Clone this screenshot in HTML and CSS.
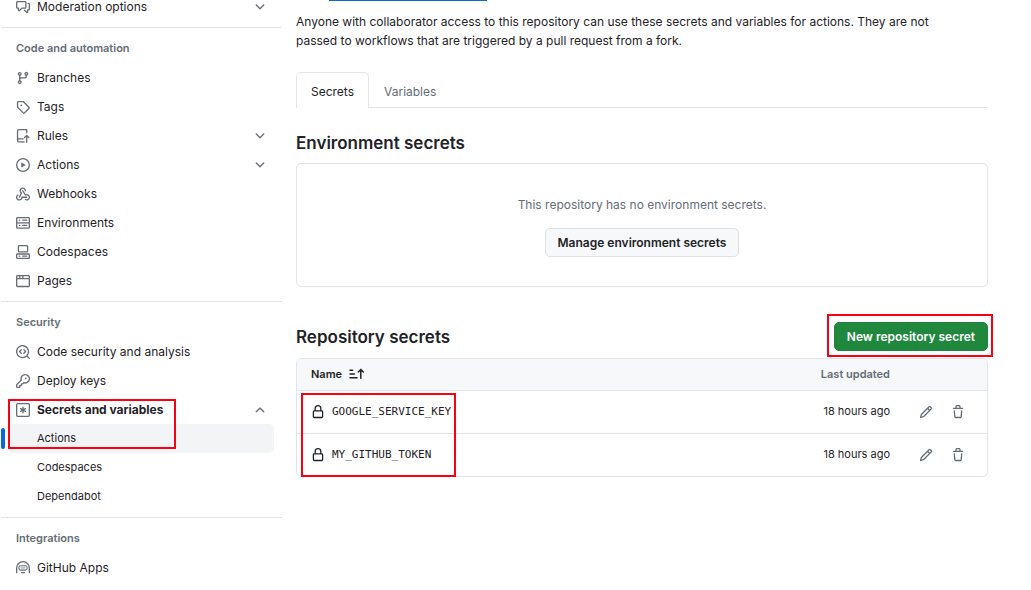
FILE: index.html
```html
<!DOCTYPE html>
<html lang="en">
<head>
<meta charset="utf-8">
<meta name="viewport" content="width=device-width, initial-scale=1">
<title>Actions secrets and variables</title>
<link rel="stylesheet" href="styles.css">
</head>
<body>
<svg class="sprite" aria-hidden="true">
  <symbol id="chevron-down" viewBox="0 0 16 16"><path d="M12.78 5.22a.749.749 0 0 1 0 1.06l-4.25 4.25a.749.749 0 0 1-1.06 0L3.22 6.28a.749.749 0 1 1 1.06-1.06L8 8.939l3.72-3.719a.749.749 0 0 1 1.06 0Z"/></symbol>
  <symbol id="chevron-up" viewBox="0 0 16 16"><path d="M3.22 10.53a.749.749 0 0 1 0-1.06l4.25-4.25a.749.749 0 0 1 1.06 0l4.25 4.25a.749.749 0 1 1-1.06 1.06L8 6.811 4.28 10.53a.749.749 0 0 1-1.06 0Z"/></symbol>
  <symbol id="discussion" viewBox="0 0 16 16"><path d="M1.75 1h8.5c.966 0 1.75.784 1.75 1.75v5.5A1.75 1.75 0 0 1 10.25 10H7.061l-2.574 2.573A1.458 1.458 0 0 1 2 11.543V10h-.25A1.75 1.75 0 0 1 0 8.25v-5.5C0 1.784.784 1 1.75 1ZM1.5 2.75v5.5c0 .138.112.25.25.25h1a.75.75 0 0 1 .75.75v2.19l2.72-2.72a.749.749 0 0 1 .53-.22h3.5a.25.25 0 0 0 .25-.25v-5.5a.25.25 0 0 0-.25-.25h-8.5a.25.25 0 0 0-.25.25Zm13 2a.25.25 0 0 0-.25-.25h-.5a.75.75 0 0 1 0-1.5h.5c.966 0 1.75.784 1.75 1.75v5.5A1.75 1.75 0 0 1 14.25 12H14v1.543a1.458 1.458 0 0 1-2.487 1.03L9.22 12.28a.749.749 0 0 1 .326-1.275.749.749 0 0 1 .734.215l2.22 2.22v-2.19a.75.75 0 0 1 .75-.75h1a.25.25 0 0 0 .25-.25Z"/></symbol>
  <symbol id="branch" viewBox="0 0 16 16"><path d="M9.5 3.25a2.25 2.25 0 1 1 3 2.122V6A2.5 2.5 0 0 1 10 8.5H6a1 1 0 0 0-1 1v1.128a2.251 2.251 0 1 1-1.5 0V5.372a2.25 2.25 0 1 1 1.5 0v1.836A2.493 2.493 0 0 1 6 7h4a1 1 0 0 0 1-1v-.628A2.25 2.25 0 0 1 9.5 3.25Zm-6 0a.75.75 0 1 0 1.5 0 .75.75 0 0 0-1.5 0Zm8.25-.75a.75.75 0 1 0 0 1.5.75.75 0 0 0 0-1.5ZM4.25 12a.75.75 0 1 0 0 1.5.75.75 0 0 0 0-1.5Z"/></symbol>
  <symbol id="tag" viewBox="0 0 16 16"><path d="M1 7.775V2.75C1 1.784 1.784 1 2.75 1h5.025c.464 0 .91.184 1.238.513l6.25 6.25a1.75 1.75 0 0 1 0 2.474l-5.026 5.026a1.75 1.75 0 0 1-2.474 0l-6.25-6.25A1.752 1.752 0 0 1 1 7.775Zm1.5 0c0 .066.026.13.073.177l6.25 6.25a.25.25 0 0 0 .354 0l5.025-5.025a.25.25 0 0 0 0-.354l-6.25-6.25a.25.25 0 0 0-.177-.073H2.75a.25.25 0 0 0-.25.25ZM6 5a1 1 0 1 1 0 2 1 1 0 0 1 0-2Z"/></symbol>
  <symbol id="rules" viewBox="0 0 16 16"><path d="M1 2.5A2.5 2.5 0 0 1 3.5 0h8.75a.75.75 0 0 1 .75.75v3.5a.75.75 0 0 1-1.5 0V1.5h-8a1 1 0 0 0-1 1v8.208A2.493 2.493 0 0 1 3.5 10.5h4.75a.75.75 0 0 1 0 1.5H3.5a1 1 0 0 0 0 2h5.75a.75.75 0 0 1 0 1.5H3.5A2.5 2.5 0 0 1 1 13Zm13.23 7.79-1.22-1.22v6.18a.75.75 0 0 1-1.5 0V9.07l-1.22 1.22a.75.75 0 1 1-1.06-1.06l2.5-2.5a.75.75 0 0 1 1.06 0l2.5 2.5a.75.75 0 1 1-1.06 1.06Z"/></symbol>
  <symbol id="play" viewBox="0 0 16 16"><path d="M8 0a8 8 0 1 1 0 16A8 8 0 0 1 8 0ZM1.5 8a6.5 6.5 0 1 0 13 0 6.5 6.5 0 0 0-13 0Zm4.879-2.773 4.264 2.559a.25.25 0 0 1 0 .428l-4.264 2.559A.25.25 0 0 1 6 10.559V5.442a.25.25 0 0 1 .379-.215Z"/></symbol>
  <symbol id="webhook" viewBox="0 0 16 16"><path d="M5.5 4.25a2.25 2.25 0 0 1 4.5 0 .75.75 0 0 0 1.5 0 3.75 3.75 0 1 0-6.14 2.889l-2.272 4.258a.75.75 0 0 0 1.324.706L7 7.25a.75.75 0 0 0-.309-1.015A2.25 2.25 0 0 1 5.5 4.25Z"/><path d="M7.364 3.607a.75.75 0 0 1 1.03.257l2.608 4.349a3.75 3.75 0 1 1-.628 6.785.75.75 0 0 1 .752-1.299 2.25 2.25 0 1 0-.033-3.88.75.75 0 0 1-1.03-.256L7.107 4.636a.75.75 0 0 1 .257-1.03Z"/><path d="M2.9 8.776A.75.75 0 0 1 2.625 9.8 2.25 2.25 0 1 0 6 11.75a.75.75 0 0 1 .75-.751h5.5a.75.75 0 0 1 0 1.5H7.425a3.751 3.751 0 1 1-5.55-3.998.75.75 0 0 1 1.024.274Z"/></symbol>
  <symbol id="server" viewBox="0 0 16 16"><path d="M1.75 1h12.5c.966 0 1.75.784 1.75 1.75v4c0 .372-.116.717-.314 1 .198.283.314.628.314 1v4a1.75 1.75 0 0 1-1.75 1.75H1.75A1.75 1.75 0 0 1 0 12.75v-4c0-.358.109-.707.314-1a1.739 1.739 0 0 1-.314-1v-4C0 1.784.784 1 1.75 1ZM1.5 2.75v4c0 .138.112.25.25.25h12.5a.25.25 0 0 0 .25-.25v-4a.25.25 0 0 0-.25-.25H1.75a.25.25 0 0 0-.25.25Zm.25 5.75a.25.25 0 0 0-.25.25v4c0 .138.112.25.25.25h12.5a.25.25 0 0 0 .25-.25v-4a.25.25 0 0 0-.25-.25ZM7 4.75A.75.75 0 0 1 7.75 4h4.5a.75.75 0 0 1 0 1.5h-4.5A.75.75 0 0 1 7 4.75ZM7.75 10h4.5a.75.75 0 0 1 0 1.5h-4.5a.75.75 0 0 1 0-1.5ZM3 4.75A.75.75 0 0 1 3.75 4h.5a.75.75 0 0 1 0 1.5h-.5A.75.75 0 0 1 3 4.75ZM3.75 10h.5a.75.75 0 0 1 0 1.5h-.5a.75.75 0 0 1 0-1.5Z"/></symbol>
  <symbol id="codespaces" viewBox="0 0 16 16"><path d="M0 11.25c0-.966.784-1.75 1.75-1.75h12.5c.966 0 1.75.784 1.75 1.75v3A1.75 1.75 0 0 1 14.25 16H1.75A1.75 1.75 0 0 1 0 14.25Zm2-9.5C2 .784 2.784 0 3.75 0h8.5C13.216 0 14 .784 14 1.75v5a1.75 1.75 0 0 1-1.75 1.75h-8.5A1.75 1.75 0 0 1 2 6.75Zm1.75-.25a.25.25 0 0 0-.25.25v5c0 .138.112.25.25.25h8.5a.25.25 0 0 0 .25-.25v-5a.25.25 0 0 0-.25-.25Zm-2 9.5a.25.25 0 0 0-.25.25v3c0 .138.112.25.25.25h12.5a.25.25 0 0 0 .25-.25v-3a.25.25 0 0 0-.25-.25Z"/><path d="M7 12.75a.75.75 0 0 1 .75-.75h4.5a.75.75 0 0 1 0 1.5h-4.5a.75.75 0 0 1-.75-.75Zm-4 0a.75.75 0 0 1 .75-.75h.5a.75.75 0 0 1 0 1.5h-.5a.75.75 0 0 1-.75-.75Z"/></symbol>
  <symbol id="browser" viewBox="0 0 16 16"><path d="M0 2.75C0 1.784.784 1 1.75 1h12.5c.966 0 1.75.784 1.75 1.75v10.5A1.75 1.75 0 0 1 14.25 15H1.75A1.75 1.75 0 0 1 0 13.25ZM14.5 6h-13v7.25c0 .138.112.25.25.25h12.5a.25.25 0 0 0 .25-.25Zm-6-3.5v2h6V2.75a.25.25 0 0 0-.25-.25ZM5 2.5v2h2v-2Zm-3.25 0a.25.25 0 0 0-.25.25V4.5h2v-2Z"/></symbol>
  <symbol id="codescan" viewBox="0 0 16 16"><path d="M8.47 4.97a.75.75 0 0 0 0 1.06L9.94 7.5 8.47 8.97a.75.75 0 1 0 1.06 1.06l2-2a.75.75 0 0 0 0-1.06l-2-2a.75.75 0 0 0-1.06 0ZM6.53 6.03a.75.75 0 0 0-1.06-1.06l-2 2a.75.75 0 0 0 0 1.06l2 2a.75.75 0 1 0 1.06-1.06L5.06 7.5l1.47-1.47Z"/><path d="M12.246 13.307a7.501 7.501 0 1 1 1.06-1.06l2.474 2.473a.749.749 0 1 1-1.06 1.06ZM1.5 7.5a6.002 6.002 0 0 0 3.608 5.504 6.002 6.002 0 0 0 6.486-1.117.748.748 0 0 1 .292-.293A6 6 0 1 0 1.5 7.5Z"/></symbol>
  <symbol id="key" viewBox="0 0 16 16"><path d="M10.5 0a5.499 5.499 0 1 1-1.288 10.848l-.932.932a.749.749 0 0 1-.53.22H7v.75a.749.749 0 0 1-.22.53l-.5.5a.749.749 0 0 1-.53.22H5v.75a.749.749 0 0 1-.22.53l-.5.5a.749.749 0 0 1-.53.22h-2A1.75 1.75 0 0 1 0 14.25v-2c0-.199.079-.389.22-.53l4.932-4.932A5.5 5.5 0 0 1 10.5 0Zm-4 5.5c-.001.431.069.86.205 1.269a.75.75 0 0 1-.181.768L1.5 12.56v1.69c0 .138.112.25.25.25h1.69l.06-.06v-1.19a.75.75 0 0 1 .75-.75h1.19l.06-.06v-1.19a.75.75 0 0 1 .75-.75h1.19l1.023-1.025a.75.75 0 0 1 .768-.18A4 4 0 1 0 6.5 5.5ZM11 6a1 1 0 1 1 0-2 1 1 0 0 1 0 2Z"/></symbol>
  <symbol id="asterisk" viewBox="0 0 16 16"><g fill="none" stroke="currentColor" stroke-width="1.5" stroke-linecap="round"><rect x=".75" y=".75" width="14.5" height="14.5" rx="1.2"/><path d="M8 4.8v6.4M5.2 6.4l5.6 3.2M10.8 6.4 5.2 9.6"/></g></symbol>
  <symbol id="hubot" viewBox="0 0 16 16"><g fill="none" stroke="currentColor" stroke-width="1.5" stroke-linecap="round" stroke-linejoin="round"><path d="M.75 13.3V8a7.25 7.25 0 0 1 14.5 0v5.3M6.2 13.2h3.6"/><rect x="3.3" y="5.4" width="9.4" height="5" rx="2" stroke-width="1.2"/><path d="m5.8 7.5 1.1.9L8 7.5l1.1.9 1.1-.9" stroke-width=".9"/></g></symbol>
  <symbol id="lock" viewBox="0 0 16 16"><path d="M4 4a4 4 0 0 1 8 0v2h.25c.966 0 1.75.784 1.75 1.75v5.5A1.75 1.75 0 0 1 12.25 15h-8.5A1.75 1.75 0 0 1 2 13.25v-5.5C2 6.784 2.784 6 3.75 6H4Zm8.25 3.5h-8.5a.25.25 0 0 0-.25.25v5.5c0 .138.112.25.25.25h8.5a.25.25 0 0 0 .25-.25v-5.5a.25.25 0 0 0-.25-.25ZM10.5 6V4a2.5 2.5 0 1 0-5 0v2Z"/></symbol>
  <symbol id="pencil" viewBox="0 0 16 16"><path d="M11.013 1.427a1.75 1.75 0 0 1 2.474 0l1.086 1.086a1.75 1.75 0 0 1 0 2.474l-8.61 8.61c-.21.21-.47.364-.756.445l-3.251.93a.75.75 0 0 1-.927-.928l.929-3.25c.081-.286.235-.547.445-.758l8.61-8.61Zm.176 4.823L9.75 4.81l-6.286 6.287a.253.253 0 0 0-.064.108l-.558 1.953 1.953-.558a.253.253 0 0 0 .108-.064Zm1.238-3.763a.25.25 0 0 0-.354 0L10.811 3.75l1.439 1.44 1.263-1.263a.25.25 0 0 0 0-.354Z"/></symbol>
  <symbol id="trash" viewBox="0 0 16 16"><path d="M11 1.75V3h2.25a.75.75 0 0 1 0 1.5H2.75a.75.75 0 0 1 0-1.5H5V1.75C5 .784 5.784 0 6.75 0h2.5C10.216 0 11 .784 11 1.75ZM4.496 6.675l.66 6.6a.25.25 0 0 0 .249.225h5.19a.25.25 0 0 0 .249-.225l.66-6.6a.75.75 0 0 1 1.492.149l-.66 6.6A1.748 1.748 0 0 1 10.595 15h-5.19a1.75 1.75 0 0 1-1.741-1.575l-.66-6.6a.75.75 0 1 1 1.492-.15ZM6.5 1.75V3h3V1.75a.25.25 0 0 0-.25-.25h-2.5a.25.25 0 0 0-.25.25Z"/></symbol>
  <symbol id="sort" viewBox="0 0 16 16"><path fill="none" stroke="currentColor" stroke-width="1.5" stroke-linecap="round" stroke-linejoin="round" d="M1 4.2h2.6M1 8h4.4M1 11.8h7M11.8 12.3V3.6M9.3 6l2.5-2.6L14.3 6"/></symbol>
</svg>

<div class="layout">
  <nav class="sidebar" aria-label="Repository settings">
    <div class="group">
      <button class="item" type="button"><svg class="icon"><use href="#discussion"/></svg><span class="label">Moderation options</span><svg class="icon"><use href="#chevron-down"/></svg></button>
    </div>
    <div class="group">
      <h3 class="group-title">Code and automation</h3>
      <a class="item" href="#"><svg class="icon"><use href="#branch"/></svg><span class="label">Branches</span></a>
      <a class="item" href="#"><svg class="icon"><use href="#tag"/></svg><span class="label">Tags</span></a>
      <button class="item" type="button"><svg class="icon"><use href="#rules"/></svg><span class="label">Rules</span><svg class="icon"><use href="#chevron-down"/></svg></button>
      <button class="item" type="button"><svg class="icon"><use href="#play"/></svg><span class="label">Actions</span><svg class="icon"><use href="#chevron-down"/></svg></button>
      <a class="item" href="#"><svg class="icon"><use href="#webhook"/></svg><span class="label">Webhooks</span></a>
      <a class="item" href="#"><svg class="icon"><use href="#server"/></svg><span class="label">Environments</span></a>
      <a class="item" href="#"><svg class="icon"><use href="#codespaces"/></svg><span class="label">Codespaces</span></a>
      <a class="item" href="#"><svg class="icon"><use href="#browser"/></svg><span class="label">Pages</span></a>
    </div>
    <div class="group">
      <h3 class="group-title">Security</h3>
      <a class="item" href="#"><svg class="icon"><use href="#codescan"/></svg><span class="label">Code security and analysis</span></a>
      <a class="item" href="#"><svg class="icon"><use href="#key"/></svg><span class="label">Deploy keys</span></a>
      <div class="marked marked-menu">
        <button class="item item-open" type="button" aria-expanded="true"><svg class="icon"><use href="#asterisk"/></svg><span class="label">Secrets and variables</span><svg class="icon"><use href="#chevron-up"/></svg></button>
        <a class="item subitem current" href="#" aria-current="page">Actions</a>
      </div>
      <a class="item subitem" href="#">Codespaces</a>
      <a class="item subitem" href="#">Dependabot</a>
    </div>
    <div class="group">
      <h3 class="group-title">Integrations</h3>
      <a class="item" href="#"><svg class="icon"><use href="#hubot"/></svg><span class="label">GitHub Apps</span></a>
    </div>
  </nav>

  <main class="content">
    <div class="link-edge"></div>
    <p class="intro">Anyone with collaborator access to this repository can use these secrets and variables for actions. They are not passed to workflows that are triggered by a pull request from a fork.</p>
    <nav class="tabs" aria-label="Secrets and variables">
      <a class="tab tab-selected" href="#" aria-current="page">Secrets</a>
      <a class="tab" href="#">Variables</a>
    </nav>

    <h2 class="title">Environment secrets</h2>
    <div class="blank">
      <p class="blank-text">This repository has no environment secrets.</p>
      <button class="button" type="button">Manage environment secrets</button>
    </div>

    <div class="title-row">
      <h2 class="title">Repository secrets</h2>
      <div class="marked marked-button">
        <button class="button button-primary" type="button">New repository secret</button>
      </div>
    </div>
    <div class="marked marked-names">
      <div class="table-box">
        <table class="secrets">
          <thead>
            <tr>
              <th class="name" scope="col"><span class="cell">Name <svg class="icon sort"><use href="#sort"/></svg></span></th>
              <th class="updated" scope="col">Last updated</th>
              <td class="actions"></td>
            </tr>
          </thead>
          <tbody>
            <tr>
              <td class="name"><span class="cell"><svg class="icon dark"><use href="#lock"/></svg><code>GOOGLE_SERVICE_KEY</code></span></td>
              <td class="updated">18 hours ago</td>
              <td class="actions"><span class="cell tools"><button class="tool" type="button" aria-label="Edit GOOGLE_SERVICE_KEY"><svg class="icon"><use href="#pencil"/></svg></button><button class="tool" type="button" aria-label="Remove GOOGLE_SERVICE_KEY"><svg class="icon"><use href="#trash"/></svg></button></span></td>
            </tr>
            <tr>
              <td class="name"><span class="cell"><svg class="icon dark"><use href="#lock"/></svg><code>MY_GITHUB_TOKEN</code></span></td>
              <td class="updated">18 hours ago</td>
              <td class="actions"><span class="cell tools"><button class="tool" type="button" aria-label="Edit MY_GITHUB_TOKEN"><svg class="icon"><use href="#pencil"/></svg></button><button class="tool" type="button" aria-label="Remove MY_GITHUB_TOKEN"><svg class="icon"><use href="#trash"/></svg></button></span></td>
            </tr>
          </tbody>
        </table>
      </div>
    </div>
  </main>
</div>
</body>
</html>
```
FILE: styles.css
```css
*, *::before, *::after { box-sizing: border-box; }

body {
  margin: 0;
  background: #fff;
  color: #1f2328;
  font: 12px/19px Inter, "Liberation Sans", sans-serif;
}

h2, h3, p { margin: 0; }
button { font: inherit; color: inherit; cursor: pointer; }
a { color: inherit; text-decoration: none; }

.sprite { display: none; }

.icon {
  width: 14px;
  height: 14px;
  flex: none;
  display: block;
  fill: currentColor;
  color: #656d76;
}
.dark { color: #1f2328; }

.layout {
  display: flex;
  gap: 14px;
  padding: 0 43px 0 1px;
}

/* Sidebar */
.sidebar {
  flex: none;
  width: 281px;
  margin-top: -8px;
}
.group { padding: 0 8px 6px 7px; }
.group + .group {
  border-top: 1px solid #e1e5ea;
  padding-top: 6px;
}
.group-title {
  padding-left: 8px;
  font-size: 11px;
  font-weight: 600;
  line-height: 29px;
  color: #656d76;
}
.item {
  display: flex;
  align-items: center;
  gap: 7px;
  width: 100%;
  height: 29px;
  padding: 0 7px 0 8px;
  border: 0;
  border-radius: 5px;
  background: none;
  text-align: left;
}
.label { flex: 1; }
.item-open { font-weight: 700; }
.subitem {
  padding-left: 29px;
  font-size: 11px;
}
.current {
  position: relative;
  background: #f3f4f6;
}
.current::before {
  content: "";
  position: absolute;
  left: -7px;
  top: 4px;
  width: 4px;
  height: 21px;
  border-radius: 5px;
  background: #0969da;
}

/* Red callout frames laid over the page */
.marked { position: relative; }
.marked::after {
  content: "";
  position: absolute;
  border: 2px solid #fb0012;
  pointer-events: none;
}
.marked-menu::after { left: 0; top: 4px; width: 168px; bottom: 4px; }
.marked-button::after { inset: -8px -5px -6px -7px; }
.marked-names::after { left: 5px; top: 35px; width: 155px; bottom: 0; }

/* Content */
.content { flex: 1; min-width: 0; }
.link-edge {
  width: 158px;
  height: 1px;
  margin-left: 33px;
  background: #0969da;
}
.intro { padding: 11px 24px 22px 0; }

.tabs {
  display: flex;
  height: 36px;
  border-bottom: 1px solid #e1e5ea;
}
.tab {
  padding: 9px 14px;
  margin-bottom: -1px;
  border: 1px solid transparent;
  border-bottom: 0;
  color: #656d76;
}
.tab-selected {
  border-color: #e1e5ea;
  border-radius: 5px 5px 0 0;
  background: #fff;
  color: #1f2328;
}

.title {
  font-size: 17px;
  font-weight: 600;
  line-height: 24px;
}
.tabs + .title { padding: 23px 0 8px; }

.blank {
  display: flex;
  flex-direction: column;
  align-items: center;
  gap: 14px;
  padding: 31px 16px 29px;
  border: 1px solid #e1e5ea;
  border-radius: 5px;
}
.blank-text { color: #656d76; }

.button {
  height: 29px;
  padding: 0 12px;
  border: 1px solid #dfe2e5;
  border-radius: 5px;
  background: #f6f8fa;
  font-weight: 600;
  white-space: nowrap;
}
.button-primary {
  border-color: #1f833c;
  background: #1f883d;
  color: #fff;
}

.title-row {
  display: flex;
  align-items: center;
  justify-content: space-between;
  padding: 35px 0 7px;
}

.table-box {
  border: 1px solid #e1e5ea;
  border-radius: 5px;
  overflow: hidden;
}
.secrets {
  width: 100%;
  border-collapse: collapse;
  font-size: 11px;
}
.secrets th, .secrets td { padding: 0; }
.secrets thead tr { height: 31px; background: #f6f8fa; }
.secrets tbody tr { height: 43px; border-top: 1px solid #e1e5ea; }
.secrets th { font-weight: 600; }
.secrets .name { padding-left: 14px; text-align: left; }
.secrets .updated { width: 96px; text-align: right; }
.secrets th.updated { color: #656d76; }
.secrets .actions { width: 97px; }
.cell { display: flex; align-items: center; gap: 7px; }
.sort { width: 16px; height: 16px; color: #1f2328; }
.tools { gap: 4px; padding-left: 22px; }
.tool {
  padding: 7px;
  border: 0;
  background: none;
}
code { font: 11px/19px "DejaVu Sans Mono", monospace; }
```
